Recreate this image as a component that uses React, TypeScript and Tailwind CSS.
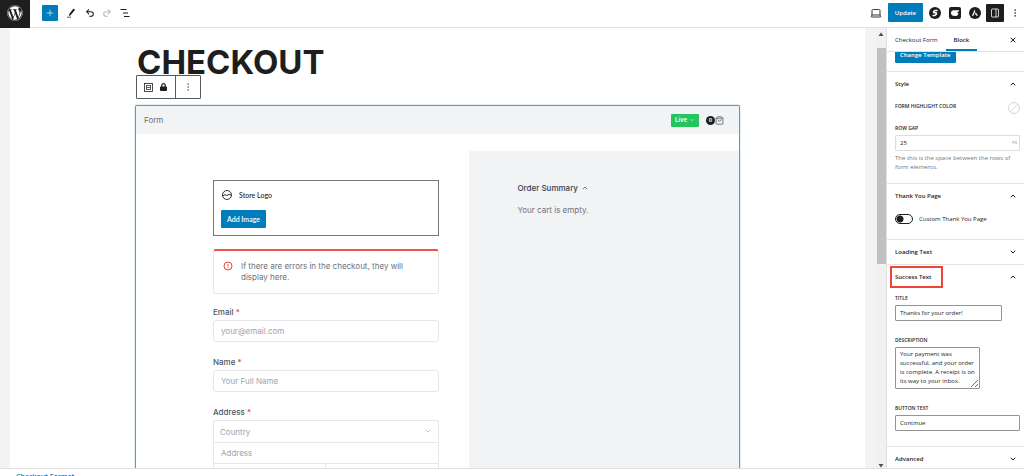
import type { ReactNode } from 'react'
import { ChevronDown, ChevronUp, EllipsisVertical, Laptop, Plus, Redo2, ShoppingBag, Undo2, X } from 'lucide-react'
import { FaLock, FaWordpress } from 'react-icons/fa'

function Header() {
  return (
    <header className="flex h-7 shrink-0 items-center border-b border-[#e0e0e0] bg-white pb-0.5">
      <a href="#" aria-label="View posts" className="flex h-7 w-[30px] items-center justify-center self-start bg-[#1e1e1e] pb-0.5 text-white">
        <FaWordpress className="h-4 w-4" />
      </a>
      <button aria-label="Add block" className="ml-3 flex h-4 w-4 items-center justify-center rounded-[1px] bg-[#007cba] text-white">
        <Plus className="h-2.5 w-2.5" strokeWidth={1.5} />
      </button>
      <button aria-label="Tools" className="ml-[7px] flex w-3 justify-center">
        <svg viewBox="0 0 24 24" className="h-3 w-3" fill="#1e1e1e">
          <path d="M19.5 4.800l-2-1.300c-.5-.3-1-.2-1.400.300L8.500 14l-1 4.200 3.600-1.700 8.700-10.400c.4-.5.2-1-.3-1.300z" />
          <path d="M4 19.500h8v1.500H4z" />
        </svg>
      </button>
      <button aria-label="Undo" className="ml-2 text-[#1e1e1e]">
        <Undo2 className="h-2.5 w-2.5" strokeWidth={2.5} />
      </button>
      <button aria-label="Redo" className="ml-[7px] text-[#bbb]">
        <Redo2 className="h-2.5 w-2.5" strokeWidth={2.5} />
      </button>
      <button aria-label="Document overview" className="ml-2">
        <svg viewBox="0 0 10 10" className="h-2.5 w-2.5" stroke="#1e1e1e" strokeWidth="1">
          <path d="M0.500 1.500h6M3 5h5M4 8.500h5.500" />
        </svg>
      </button>

      <div className="ml-auto flex items-center">
        <button aria-label="Preview" className="text-[#1e1e1e]">
          <Laptop className="h-3 w-3" strokeWidth={1.8} />
        </button>
        <button className="ml-1.5 h-[19px] rounded-[1px] bg-[#007cba] px-[7px] font-semibold text-white">Update</button>
        <button aria-label="SureCart" className="ml-1.5">
          <svg viewBox="0 0 12 12" className="h-3 w-3">
            <circle cx="6" cy="6" r="6" fill="#1e1e1e" />
            <path d="M8.600 3.400H6.300C4.800 3.400 3.800 5.700 5.300 5.700H6.800C8.300 5.700 7.200 8.400 5.700 8.400H3.500" fill="none" stroke="#fff" strokeWidth="1.500" />
          </svg>
        </button>
        <button aria-label="Spectra" className="ml-2">
          <svg viewBox="0 0 12 12" className="h-3 w-3">
            <rect width="12" height="12" rx="2" fill="#1e1e1e" />
            <path d="M4.500 3.300H10.200L9.200 4.900H8.500V6.200H9.500C9.300 8.300 7.800 9 5.700 9 3.500 9 2 8 2 6 2 4.500 3 3.300 4.500 3.300z" fill="#fff" />
          </svg>
        </button>
        <button aria-label="Astra settings" className="ml-2">
          <svg viewBox="0 0 12 12" className="h-3 w-3">
            <circle cx="6" cy="6" r="6" fill="#1e1e1e" />
            <path d="M5.700 2.500L2.900 8.800H4.300L6.300 4.200zM6.800 5.200L5.700 7.500H6.900L7.500 8.800H9z" fill="#fff" />
          </svg>
        </button>
        <button aria-label="Settings" className="ml-[5px] flex h-[18px] w-[18px] items-center justify-center rounded-[1px] bg-[#1e1e1e]">
          <svg viewBox="0 0 10 10" className="h-2.5 w-2.5" fill="none" stroke="#fff" strokeWidth="0.800">
            <rect x="1.500" y="1" width="7" height="8" rx="0.500" />
            <path d="M6 1v8" />
          </svg>
        </button>
        <button aria-label="Options" className="mr-1 ml-1.5">
          <EllipsisVertical className="h-2.5 w-2.5" strokeWidth={1.5} />
        </button>
      </div>
    </header>
  )
}

function Field({ label, id, children }: { label: string; id: string; children: ReactNode }) {
  return (
    <div className="mb-[15px]">
      <label htmlFor={id} className="mb-[3px] block text-[8px] leading-[10px] font-medium text-[#4b5563]">
        {label} <span className="text-red-500">*</span>
      </label>
      {children}
    </div>
  )
}

const fieldClass =
  'block h-[22px] w-full rounded-[3px] border border-[#e5e7eb] bg-white px-[7px] text-[8px] text-[#4b5563] placeholder:text-[#9ca3af] focus:outline-none'

function CheckoutForm() {
  return (
    <section className="min-h-0 flex-1 overflow-hidden rounded-t-[2px] border border-b-0 border-[#4aa3cf] font-[Inter,sans-serif] shadow-[0_0_0_1px_#e3f0f7]">
      <div className="flex h-7 items-center bg-[#f2f3f5] px-2 text-[8px] text-[#6b7280]">
        <span>Form</span>
        <button className="ml-auto flex h-[13px] items-center gap-0.5 rounded-[1px] bg-[#22c55e] px-1 text-[6px] font-semibold text-white">
          Live
          <ChevronDown className="h-1.5 w-1.5" />
        </button>
        <button aria-label="Cart" className="mr-[7px] ml-[7px] flex items-center">
          <span className="flex h-[9px] w-[9px] items-center justify-center rounded-full bg-[#1e1e1e] text-[5px] font-bold text-white">0</span>
          <ShoppingBag className="h-[9px] w-[9px] text-[#4b5563]" />
        </button>
      </div>

      <div className="mt-[17px] flex h-full">
        <div className="w-[55.3%] pt-[29px] pr-[30px] pl-[77px]">
          <div className="border border-[#757575] px-[7px] pt-2 pb-[7px]">
            <div className="flex h-3 items-center gap-1.5 font-[Lato,sans-serif] text-[7px] font-medium text-[#1e1e1e]">
              <svg viewBox="0 0 12 12" className="h-3 w-3" fill="none" stroke="#1e1e1e" strokeWidth="0.900">
                <circle cx="6" cy="6" r="4.500" />
                <path d="M1.500 6.800L4 5.700 6 6.500 8 5.500 10.500 6" />
              </svg>
              Store Logo
            </div>
            <button className="mt-[9px] h-[18px] rounded-[1px] bg-[#007cba] px-1.5 font-[Lato,sans-serif] text-[7px] font-semibold text-white">
              Add Image
            </button>
          </div>

          <div className="my-[13px] flex gap-2 rounded-[3px] border border-t-2 border-[#e5e7eb] border-t-[#ef5350] px-[9px] py-2.5 text-[8px] leading-[11px] text-[#6b7280]">
            <svg viewBox="0 0 10 10" className="h-2.5 w-2.5 shrink-0" fill="none" stroke="#ef4444">
              <circle cx="5" cy="5" r="4" />
              <path d="M5 2.800v2.700M5 6.500v0.900" />
            </svg>
            <p>If there are errors in the checkout, they will display here.</p>
          </div>

          <Field label="Email" id="email">
            <input id="email" type="email" placeholder="your@email.com" className={fieldClass} />
          </Field>
          <Field label="Name" id="name">
            <input id="name" type="text" placeholder="Your Full Name" className={fieldClass} />
          </Field>
          <Field label="Address" id="country">
            <div className="rounded-t-[3px] border border-b-0 border-[#e5e7eb]">
              <div className="relative border-b border-[#e5e7eb]">
                <select id="country" className="block h-[21px] w-full appearance-none bg-transparent px-1.5 text-[8px] text-[#9ca3af] focus:outline-none">
                  <option>Country</option>
                </select>
                <ChevronDown className="pointer-events-none absolute top-1.5 right-1.5 h-2 w-2 text-[#9ca3af]" />
              </div>
              <input
                aria-label="Address"
                placeholder="Address"
                className="block h-[21px] w-full border-b border-[#e5e7eb] px-[7px] text-[8px] placeholder:text-[#9ca3af] focus:outline-none"
              />
              <div className="flex">
                <input aria-label="City" className="h-5 w-1/2 border-r border-[#e5e7eb] focus:outline-none" />
                <input aria-label="Postal code" className="h-5 w-1/2 focus:outline-none" />
              </div>
            </div>
          </Field>
        </div>

        <div className="flex-1 bg-[#f2f3f5] px-12 pt-8 text-[8px] leading-[10px]">
          <h2 className="flex items-center gap-[3px] font-medium text-[#374151]">
            Order Summary
            <ChevronUp className="h-2 w-2" />
          </h2>
          <p className="mt-3 text-[#6b7280]">Your cart is empty.</p>
        </div>
      </div>
    </section>
  )
}

function Canvas() {
  return (
    <main className="flex min-w-0 flex-1 bg-[#f3f3f3] pl-2.5">
      <div className="flex min-w-0 flex-1 flex-col bg-white">
        <div className="mx-auto flex min-h-0 w-[605px] max-w-full flex-1 flex-col pt-[22px]">
          <h1 className="pl-0.5 font-[Inter,sans-serif] text-[33px] leading-[25px] font-bold text-[#1e1e1e]">CHECKOUT</h1>
          <div className="mb-1.5 ml-px flex h-6 shrink-0 self-start rounded-[1px] border border-[#5a5a5a] bg-white">
            <div className="flex items-center gap-1.5 border-r border-[#5a5a5a] px-[7px]">
              <button aria-label="Form">
                <svg viewBox="0 0 9 9" className="h-[9px] w-[9px]" fill="none" stroke="#1e1e1e" strokeWidth="0.800">
                  <rect x="0.500" y="0.500" width="8" height="8" />
                  <path d="M2.500 2.500h4M2.500 4.500h4M2.500 6.500h4M2.500 2v5M6.500 2v5" strokeWidth="0.700" />
                </svg>
              </button>
              <button aria-label="Unlock">
                <FaLock className="h-2 w-[9px]" />
              </button>
            </div>
            <button aria-label="Options" className="flex w-6 items-center justify-center">
              <EllipsisVertical className="h-2.5 w-2.5" strokeWidth={1} />
            </button>
          </div>
          <CheckoutForm />
        </div>
      </div>
      <div className="w-[11px] shrink-0" />
      <div className="flex w-2.5 shrink-0 flex-col items-center bg-[#f1f1f1]" aria-hidden="true">
        <svg viewBox="0 0 6 4" className="mt-1 h-1 w-1.5 shrink-0" fill="#505050">
          <path d="M0.500 4L3 0.500 5.500 4z" />
        </svg>
        <div className="mt-3 h-[49%] w-[9px] bg-[#c1c1c1]" />
        <svg viewBox="0 0 6 4" className="mt-auto h-1 w-1.5 shrink-0" fill="#505050">
          <path d="M0.500 0L3 3.500 5.500 0z" />
        </svg>
      </div>
    </main>
  )
}

function PanelTitle({ title, open, highlighted }: { title: string; open?: boolean; highlighted?: boolean }) {
  return (
    <h2 className="relative">
      <button className="flex h-6 w-full items-center justify-between pr-[3px] font-semibold" aria-expanded={!!open}>
        {title}
        {open ? <ChevronUp className="h-2 w-2" strokeWidth={3} /> : <ChevronDown className="h-2 w-2" strokeWidth={3} />}
      </button>
      {highlighted && <span className="pointer-events-none absolute top-px -left-[5px] h-[22px] w-[53px] border-2 border-[#f04438]" />}
    </h2>
  )
}

const panelClass = 'shrink-0 border-b border-[#e4e4e4] pr-1 pl-2'
const labelClass = 'mb-0.5 block text-[5px] leading-[10px] font-semibold uppercase'
const inputClass = 'block h-4 rounded-[1px] border border-[#949494] px-1 text-[6px] focus:outline-none'

function Sidebar() {
  return (
    <aside className="flex w-[138px] shrink-0 flex-col overflow-hidden border-l border-[#e0e0e0] bg-white text-[#1e1e1e]">
      <div className="flex h-6 shrink-0 items-stretch border-b border-[#e0e0e0] pl-2">
        <button className="font-medium">Checkout Form</button>
        <button className="ml-2 border-b-2 border-[#007cba] px-2 pt-0.5 font-semibold">Block</button>
        <button aria-label="Close settings" className="mr-[7px] ml-auto">
          <X className="h-2 w-2" strokeWidth={3} />
        </button>
      </div>

      <div className="flex min-h-0 flex-1 flex-col overflow-hidden">
        <div className={panelClass}>
          <button className="mb-2 block h-[11px] rounded-b-[1px] bg-[#007cba] px-[5px] pb-1 leading-[7px] font-semibold text-white">
            Change Template
          </button>
        </div>

        <div className={panelClass}>
          <PanelTitle title="Style" open />
          <div className="mt-[5px] mb-2 flex h-3.5 items-start justify-between">
            <span className="text-[5px] font-semibold uppercase">Form highlight color</span>
            <button aria-label="Form highlight color" className="self-center">
              <svg viewBox="0 0 12 12" className="h-3 w-3" fill="none" stroke="#ccc" strokeWidth="0.800">
                <circle cx="6" cy="6" r="5.500" />
                <path d="M2.500 9.500l7-7" />
              </svg>
            </button>
          </div>
          <label htmlFor="gap" className={labelClass}>Row gap</label>
          <div className="flex h-4 items-center rounded-[1px] border border-[#ddd]">
            <input id="gap" defaultValue="25" className="min-w-0 flex-1 px-1 text-[6px] focus:outline-none" />
            <span className="pr-0.5 text-[4px] text-[#757575] uppercase">px</span>
          </div>
          <p className="mt-[3px] mb-[11px] leading-[9px] text-[#757575]">The this is the space between the rows of form elements.</p>
        </div>

        <div className={panelClass}>
          <PanelTitle title="Thank You Page" open />
          <label className="mt-1.5 mb-[15px] flex h-2.5 items-center gap-1.5">
            <input
              type="checkbox"
              className="h-2.5 w-[18px] appearance-none rounded-full border border-[#1e1e1e] bg-[radial-gradient(circle_at_4px_4px,#1e1e1e_3px,transparent_4px)]"
            />
            Custom Thank You Page
          </label>
        </div>

        <div className={panelClass}>
          <PanelTitle title="Loading Text" />
        </div>

        <div className={panelClass}>
          <PanelTitle title="Success Text" open highlighted />
          <label htmlFor="title" className={`mt-1 ${labelClass}`}>Title</label>
          <input id="title" defaultValue="Thanks for your order!" className={`mb-3.5 w-[107px] ${inputClass}`} />
          <label htmlFor="description" className={labelClass}>Description</label>
          <textarea
            id="description"
            defaultValue="Your payment was successful, and your order is complete. A receipt is on its way to your inbox."
            className="mb-3.5 block h-[42px] w-[85px] overflow-hidden rounded-[1px] border border-[#949494] py-0.5 pr-[3px] pl-1 text-[6px] leading-[9px] focus:outline-none"
          />
          <label htmlFor="button-text" className={labelClass}>Button text</label>
          <input id="button-text" defaultValue="Continue" className={`mb-[15px] w-full ${inputClass}`} />
        </div>

        <div className={panelClass}>
          <PanelTitle title="Advanced" />
        </div>
      </div>
    </aside>
  )
}

export default function App() {
  return (
    <div className="flex h-screen flex-col overflow-hidden bg-white font-['Open_Sans',sans-serif] text-[6px] leading-[10px] text-[#1e1e1e]">
      <Header />
      <div className="flex min-h-0 flex-1">
        <Canvas />
        <Sidebar />
      </div>
      <footer className="h-2 shrink-0 overflow-hidden border-t border-[#e0e0e0] px-4 pt-[3px]">
        <a href="#" className="block text-[7px] font-semibold text-[#007cba]">Checkout Format</a>
      </footer>
    </div>
  )
}
